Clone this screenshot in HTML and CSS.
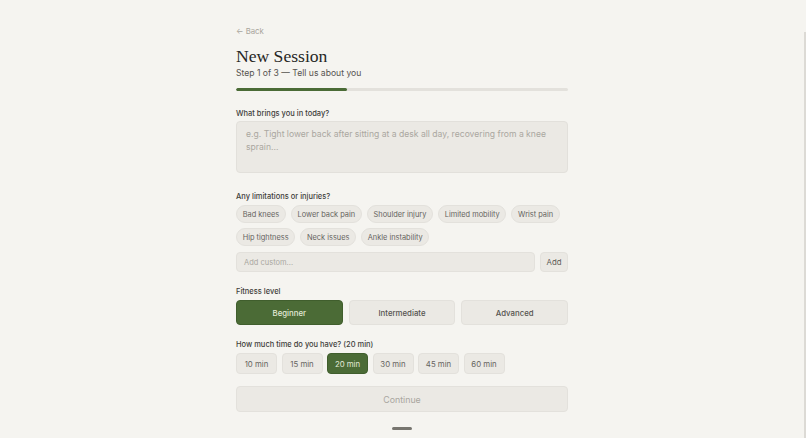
FILE: index.html
```html
<!DOCTYPE html>
<html lang="en">
<head>
<meta charset="utf-8">
<title>New Session</title>
<link rel="stylesheet" href="styles.css">
</head>
<body>
<div class="edge"></div>
<main class="page">
  <a class="back" href="#">← Back</a>
  <h1 class="title">New Session</h1>
  <p class="subtitle">Step 1 of 3 — Tell us about you</p>
  <div class="progress"><div class="progress-fill" style="width:33.3%"></div></div>

  <section class="field first">
    <label class="label">What brings you in today?</label>
    <div class="textarea">e.g. Tight lower back after sitting at a desk all day, recovering from a knee sprain...</div>
  </section>

  <section class="field second">
    <label class="label">Any limitations or injuries?</label>
    <div class="chips">
      <span class="chip">Bad knees</span>
      <span class="chip">Lower back pain</span>
      <span class="chip">Shoulder injury</span>
      <span class="chip">Limited mobility</span>
      <span class="chip">Wrist pain</span>
      <span class="chip">Hip tightness</span>
      <span class="chip">Neck issues</span>
      <span class="chip">Ankle instability</span>
    </div>
    <div class="custom-row">
      <div class="input">Add custom...</div>
      <button class="add-btn">Add</button>
    </div>
  </section>

  <section class="field">
    <label class="label">Fitness level</label>
    <div class="levels">
      <button class="level active">Beginner</button>
      <button class="level">Intermediate</button>
      <button class="level">Advanced</button>
    </div>
  </section>

  <section class="field">
    <label class="label">How much time do you have? (20 min)</label>
    <div class="times">
      <button class="time">10 min</button>
      <button class="time">15 min</button>
      <button class="time active">20 min</button>
      <button class="time">30 min</button>
      <button class="time">45 min</button>
      <button class="time">60 min</button>
    </div>
  </section>

  <button class="continue">Continue</button>
  <div class="handle"></div>
</main>
</body>
</html>
```

FILE: styles.css
```css
* { box-sizing: border-box; }
html, body {
  margin: 0;
  padding: 0;
  background: #f5f4f0;
  font-family: Inter, "Noto Sans", sans-serif;
  color: #3a3a38;
  height: 100%;
  overflow: hidden;
}
body { padding-right: 2px; }
.edge {
  position: fixed;
  top: 32px;
  right: 0;
  bottom: 0;
  width: 2px;
  background: #dcdad5;
}
.page {
  width: 332px;
  margin: 0 auto;
  padding-top: 25px;
  display: flex;
  flex-direction: column;
}
.back {
  font-size: 7.8px;
  line-height: 12px;
  color: #a9a59d;
  text-decoration: none;
}
.title {
  margin: 8px 0 0;
  font-family: "Liberation Serif", "DejaVu Serif", serif;
  font-weight: 400;
  font-size: 17.6px;
  line-height: 22px;
  color: #262624;
}
.subtitle {
  margin: 0;
  font-size: 8.6px;
  line-height: 13px;
  color: #55534f;
}
.progress {
  margin-top: 8px;
  height: 3px;
  background: #e3e1dc;
  border-radius: 2px;
  overflow: hidden;
}
.progress-fill {
  height: 100%;
  background: #4a6b36;
  border-radius: 2px;
}
.field { margin-top: 14px; display: flex; flex-direction: column; }
.field.first { margin-top: 17px; }
.field.second { margin-top: 18px; }
.label {
  font-size: 7.5px;
  line-height: 11px;
  font-weight: 500;
  color: #3f3e3b;
  margin-bottom: 3px;
}
.first .label { margin-bottom: 2px; }
.textarea {
  height: 52px;
  background: #ebe9e4;
  border: 1px solid #e2e0db;
  border-radius: 4px;
  padding: 6px 9px;
  font-size: 8.6px;
  line-height: 13px;
  color: #aaa7a0;
}
.chips {
  display: flex;
  flex-wrap: wrap;
  gap: 5px;
}
.chip {
  height: 18px;
  padding: 0 5.7px;
  display: inline-flex;
  align-items: center;
  background: #ebe9e4;
  border: 1px solid #e3e1dc;
  border-radius: 9px;
  font-size: 7.4px;
  color: #66645f;
}
.custom-row {
  display: flex;
  gap: 5px;
  margin-top: 6px;
}
.input {
  flex: 1;
  height: 20px;
  background: #ebe9e4;
  border: 1px solid #e3e1dc;
  border-radius: 4px;
  padding: 0 7px;
  display: flex;
  align-items: center;
  font-size: 7.5px;
  color: #aaa7a0;
}
.add-btn {
  width: 28px;
  height: 20px;
  padding: 0;
  background: #ebe9e4;
  border: 1px solid #e3e1dc;
  border-radius: 4px;
  font-family: inherit;
  font-size: 7.8px;
  color: #5d5b57;
}
.levels {
  display: grid;
  grid-template-columns: 1fr 1fr 1fr;
  gap: 6px;
}
.level {
  height: 25px;
  background: #ebe9e4;
  border: 1px solid #e3e1dc;
  border-radius: 4px;
  font-family: inherit;
  font-size: 7.8px;
  font-weight: 500;
  color: #55534f;
  padding: 0;
}
.level.active, .time.active {
  background: #4b6b36;
  border-color: #405e2d;
  color: #e2ead6;
}
.times {
  display: flex;
  gap: 4.5px;
}
.time {
  width: 41px;
  height: 21px;
  padding: 0;
  background: #ebe9e4;
  border: 1px solid #e3e1dc;
  border-radius: 4px;
  font-family: inherit;
  font-size: 7.8px;
  color: #66645f;
}
.continue {
  margin-top: 12px;
  height: 26px;
  width: 100%;
  background: #ebe9e4;
  border: 1px solid #e3e1dc;
  border-radius: 4px;
  font-family: inherit;
  font-size: 8.8px;
  color: #a9a69f;
}
.handle {
  align-self: center;
  margin-top: 15px;
  width: 20px;
  height: 3px;
  border-radius: 2px;
  background: #77756f;
}
```
